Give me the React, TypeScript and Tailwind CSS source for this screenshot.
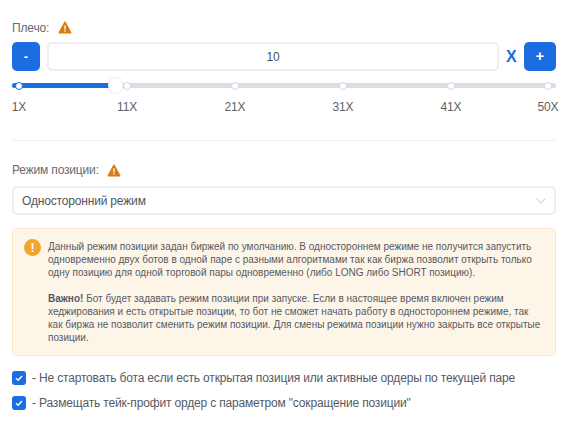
function WarnIcon() {
  return (
    <svg width="14" height="13" viewBox="0 0 14 13" className="shrink-0">
      <path d="M7 1.2 L12.8 11.8 H1.2 Z" fill="#dd7a12" stroke="#dd7a12" strokeWidth="1.4" strokeLinejoin="round" />
      <rect x="6.3" y="4.4" width="1.4" height="4" fill="#fff" />
      <rect x="6.3" y="9.2" width="1.4" height="1.4" fill="#fff" />
    </svg>
  );
}

const marks = [
  { label: "1X", left: 7 },
  { label: "11X", left: 115 },
  { label: "21X", left: 223 },
  { label: "31X", left: 331 },
  { label: "41X", left: 439 },
  { label: "50X", left: 536 },
];

function Check() {
  return (
    <span className="flex h-[14px] w-[14px] shrink-0 items-center justify-center rounded-[3px] bg-[#1a6ee0]">
      <svg width="10" height="10" viewBox="0 0 10 10" fill="none">
        <path d="M2 5.3 L4.2 7.3 L8 3" stroke="#fff" strokeWidth="1.4" />
      </svg>
    </span>
  );
}

export default function App() {
  return (
    <div className="h-[422px] w-[568px] overflow-hidden bg-white pl-3 pr-3 pt-[20px] font-['Liberation_Sans',sans-serif] text-[#5c6370]">
      <div className="flex h-[15px] items-center gap-[9px] text-[12px] tracking-[-0.17px] text-[#666a73]">
        <span>Плечо:</span>
        <WarnIcon />
      </div>

      <div className="mt-[7px] flex items-center">
        <button className="flex h-[29px] w-[28px] items-center justify-center rounded-[5px] bg-[#1a6ee0] text-[13px] font-bold text-white">
          -
        </button>
        <div className="ml-[7px] flex h-[29px] w-[452px] items-center justify-center rounded-[5px] border-2 border-[#eeeef3] bg-white text-[12px] tracking-[-0.17px] text-[#4a4f63]">
          10
        </div>
        <span className="ml-[7px] w-[12px] text-[16px] font-bold text-[#1a6ee0]">X</span>
        <button className="ml-[6px] flex h-[29px] w-[32px] items-center justify-center rounded-[5px] bg-[#1a6ee0] text-[15px] font-bold text-white">
          +
        </button>
      </div>

      <div className="relative mt-[12px] h-[5px] rounded-full bg-[#dcdce3]">
        <div className="h-[5px] w-[100px] rounded-l-full bg-[#1a6ee0]" />
        {marks.map((m, i) => (
          <span
            key={m.label}
            className={
              i === 0
                ? "absolute top-[-1.5px] h-[8px] w-[8px] -translate-x-1/2 rounded-full border-[1.5px] border-[#1a6ee0] bg-white"
                : "absolute top-[-1.5px] h-[8px] w-[8px] -translate-x-1/2 rounded-full border-[1.5px] border-[#d5d3f5] bg-white"
            }
            style={{ left: m.left }}
          />
        ))}
        <span className="absolute left-[96px] top-[-5px] h-[15px] w-[15px] rounded-full bg-white shadow-[0_0_2px_rgba(0,0,0,0.2)]" />
      </div>

      <div className="relative mt-[12px] h-[14px] text-[12px] leading-[14px] tracking-[-0.17px] text-[#5f5f5f]">
        {marks.map((m) => (
          <span key={m.label} className="absolute -translate-x-1/2" style={{ left: m.left }}>
            {m.label}
          </span>
        ))}
      </div>

      <div className="mt-[26px] h-px bg-[#f0f0f3]" />

      <div className="mt-[22px] flex h-[15px] items-center gap-2 text-[12px] tracking-[-0.17px] text-[#666a73]">
        <span className="mt-[-1px]">Режим позиции:</span>
        <WarnIcon />
      </div>

      <div className="mt-[8px] flex h-[29px] items-center justify-between rounded-[5px] border-2 border-[#eeeef3] bg-white pl-2 pr-[8px] text-[12px] tracking-[-0.17px] text-[#4f5560]">
        <span>Односторонний режим</span>
        <svg width="10" height="6" viewBox="0 0 10 6" fill="none">
          <path d="M0.7 0.7 L5 5 L9.3 0.7" stroke="#d0d3da" strokeWidth="1.1" />
        </svg>
      </div>

      <div className="mt-[13px] flex h-[128px] gap-[7px] rounded-[5px] border border-[#fbe6c8] bg-[#fef5e9] pl-[11px] pr-[12px] pt-[11px] text-[10px] leading-[13px] text-[#555a64]">
        <svg width="17" height="17" viewBox="0 0 17 17" className="mt-[-1px] shrink-0">
          <circle cx="8.5" cy="8.5" r="8.5" fill="#f2a52c" />
          <rect x="7.6" y="4" width="1.8" height="6" rx="0.6" fill="#fff" />
          <rect x="7.6" y="11.2" width="1.8" height="1.8" rx="0.6" fill="#fff" />
        </svg>
        <div className="whitespace-nowrap">
          <p>
            Данный режим позиции задан биржей по умолчанию. В одностороннем режиме не получится запустить
            <br />
            одновременно двух ботов в одной паре с разными алгоритмами так как биржа позволит открыть только
            <br />
            одну позицию для одной торговой пары одновременно (либо LONG либо SHORT позицию).
          </p>
          <p className="mt-[13px]">
            <b>Важно!</b> Бот будет задавать режим позиции при запуске. Если в настоящее время включен режим
            <br />
            хеджирования и есть открытые позиции, то бот не сможет начать работу в одностороннем режиме, так
            <br />
            как биржа не позволит сменить режим позиции. Для смены режима позиции нужно закрыть все открытые
            <br />
            позиции.
          </p>
        </div>
      </div>

      <div className="mt-[15px] flex flex-col gap-[11px] text-[12px] leading-[14px] tracking-[-0.17px] text-[#555a64]">
        <div className="flex items-center gap-[6px]">
          <Check />
          <span>- Не стартовать бота если есть открытая позиция или активные ордеры по текущей паре</span>
        </div>
        <div className="flex items-center gap-[6px]">
          <Check />
          <span>- Размещать тейк-профит ордер с параметром "сокращение позиции"</span>
        </div>
      </div>
    </div>
  );
}
